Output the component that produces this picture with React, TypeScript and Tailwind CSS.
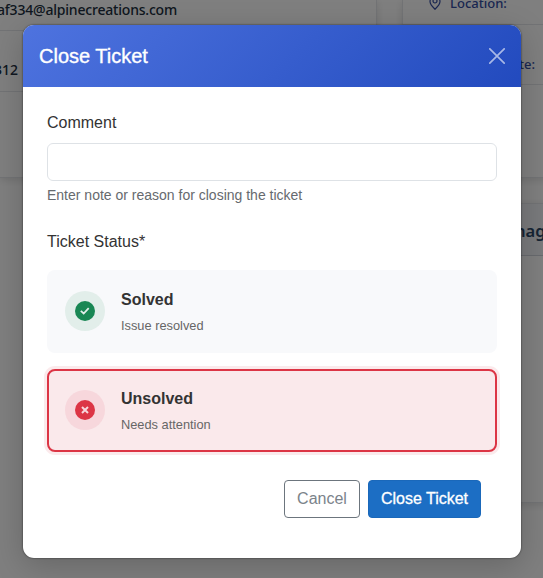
import type { ReactNode } from 'react';

function TicketPage() {
  return (
    <div className="flex h-full gap-[25px] bg-white font-['Noto_Sans',sans-serif] text-[14px] font-medium leading-5">
      <div className="h-[178px] w-[377px] shrink-0 border-r border-b border-gray-200 shadow-[0_2px_8px_rgba(0,0,0,0.12)]">
        <div className="flex h-[31px] items-start border-b border-gray-200 text-[#212f40]">
          <span className="-ml-[3px] whitespace-nowrap tracking-[-0.2px]">af334@alpinecreations.com</span>
        </div>
        <div className="flex h-[61px] items-center border-b border-gray-200 pt-[18px] text-[#212f40]">
          <span className="-ml-[6px]">312</span>
        </div>
      </div>
      <div className="w-[160px] shrink-0">
        <div className="h-[178px] border-b border-l border-gray-200 text-[13px] text-[#364fa3] shadow-[0_2px_8px_rgba(0,0,0,0.12)]">
          <div className="flex h-[25px] items-start gap-[9px] border-b border-gray-200 pl-[26px]">
            <svg className="-mt-[4px] h-[14px] w-[12px] shrink-0" viewBox="0 0 12 14" fill="none" stroke="currentColor" strokeWidth="1.2">
              <path d="M11 5.5C11 8.5 6 13.2 6 13.2S1 8.5 1 5.5a5 5 0 0 1 10 0Z" />
              <circle cx="6" cy="5" r="2" />
            </svg>
            <span className="-mt-[7px]">Location:</span>
          </div>
          <div className="flex h-[60px] items-center justify-end border-b border-gray-200 pt-[18px] pr-[27px]">
            <span className="whitespace-nowrap">Due Date:</span>
          </div>
        </div>
        <div className="mt-[25px] h-[300px] border border-gray-200 shadow-[0_2px_8px_rgba(0,0,0,0.12)]">
          <div className="flex h-[52px] items-center border-b border-gray-300 bg-[#f3f5f8] pt-[3px] pl-[87px] text-[16.5px] font-semibold text-[#2c4868]">
            <span>Manage</span>
          </div>
        </div>
      </div>
    </div>
  );
}

function StatusOption({ icon, title, note, selected }: { icon: ReactNode; title: string; note: string; selected?: boolean }) {
  return (
    <div
      className={
        selected
          ? 'flex h-[83px] items-center rounded-lg border-2 border-[#dc3545] bg-[#fae9eb] px-4 shadow-[0_0_0_3px_rgba(220,53,69,0.1)]'
          : 'flex h-[83px] items-center rounded-lg border-2 border-transparent bg-[#f8f9fb] px-4'
      }
    >
      <div className={`mb-[2px] flex size-10 shrink-0 items-center justify-center rounded-full ${selected ? 'bg-[#f7d7dc]' : 'bg-[#e2eeea]'}`}>
        {icon}
      </div>
      <div className="ml-4">
        <div className="text-[16px] font-bold leading-6 text-[#333]">{title}</div>
        <div className="mt-1 text-[12.8px] leading-5 text-[#666]">{note}</div>
      </div>
    </div>
  );
}

function CloseTicketDialog() {
  return (
    <div className="h-[533px] w-[498px] overflow-hidden rounded-[11px] bg-white font-['Liberation_Sans',Arial,sans-serif] text-[16px] leading-6 text-[#333] shadow-[0_8px_32px_rgba(0,0,0,0.2),0_0_2px_rgba(0,0,0,0.7)]">
      <div className="flex h-[62px] items-center justify-between bg-linear-135 from-[#4e73df] to-[#224abe] px-4">
        <h1 className="text-[20px] font-normal leading-[30px] text-white [-webkit-text-stroke:0.35px_white]">Close Ticket</h1>
        <svg className="size-4 text-white/60" viewBox="0 0 16 16" stroke="currentColor" strokeWidth="1.7" strokeLinecap="round">
          <path d="m.8.8 14.4 14.4M15.2.8.8 15.2" />
        </svg>
      </div>
      <div className="px-6 pt-6">
        <label htmlFor="comment" className="block">Comment</label>
        <input id="comment" className="mt-2 block h-[38px] w-full rounded-md border border-[#dee2e6] bg-white px-3 outline-none" />
        <p className="mt-1 text-[14px] leading-[21px] text-[#666a6e]">Enter note or reason for closing the ticket</p>
        <p className="mt-6">Ticket Status*</p>
        <div className="mt-4 flex flex-col gap-4">
          <StatusOption
            title="Solved"
            note="Issue resolved"
            icon={
              <svg className="size-5" viewBox="0 0 20 20">
                <circle cx="10" cy="10" r="10" fill="#198754" />
                <path d="m5.8 9.8 2.9 2.7 5-5.3" fill="none" stroke="#e2eeea" strokeWidth="1.8" />
              </svg>
            }
          />
          <StatusOption
            selected
            title="Unsolved"
            note="Needs attention"
            icon={
              <svg className="size-5" viewBox="0 0 20 20">
                <circle cx="10" cy="10" r="10" fill="#dc3545" />
                <path d="m7 7 6 6m0-6-6 6" fill="none" stroke="#f7d7dc" strokeWidth="2" />
              </svg>
            }
          />
        </div>
        <div className="mt-7 flex justify-end gap-2 pr-4">
          <button className="h-[38px] w-[76px] rounded-[4px] border border-[#6c757d] text-[#7b838a]">Cancel</button>
          <button className="h-[38px] w-[113px] rounded-[4px] border border-[#1a68ba] bg-[#1c6ec4] text-white [-webkit-text-stroke:0.3px_white]">Close Ticket</button>
        </div>
      </div>
    </div>
  );
}

export default function App() {
  return (
    <div className="relative h-[578px] w-[543px] overflow-hidden bg-white">
      <TicketPage />
      <div className="absolute inset-0 bg-black/50 pt-[25px] pl-[23px]">
        <CloseTicketDialog />
      </div>
    </div>
  );
}
